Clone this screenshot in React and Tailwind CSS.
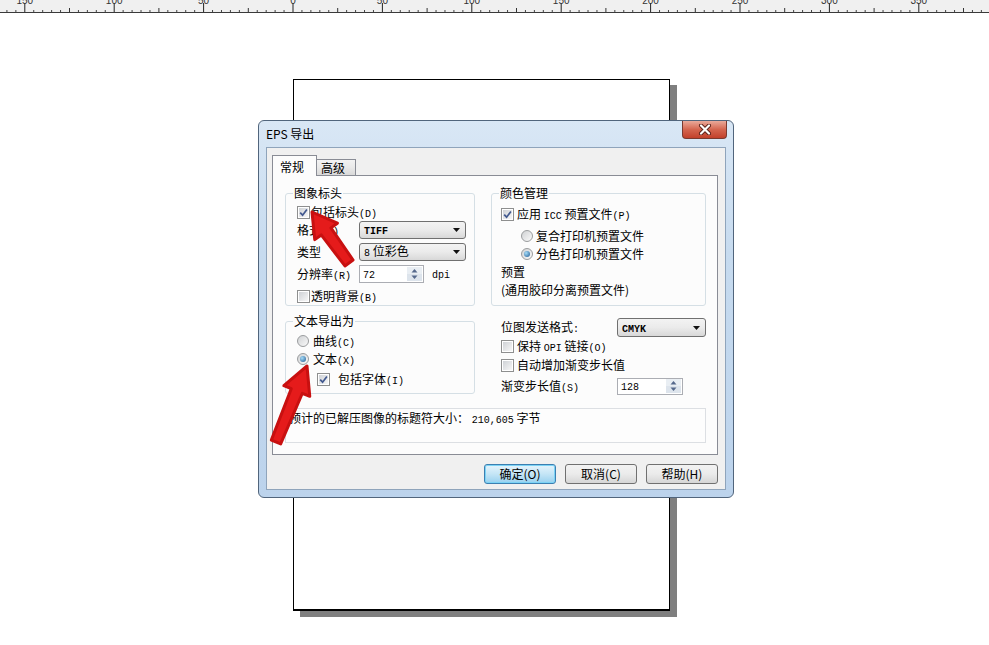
import React from "react";

const STEP = 89.4 / 10;

function Ruler() {
  const ticks = [];
  for (let i = -35; i <= 78; i++) {
    const x = 293 + i * STEP;
    if (i % 10 === 0) {
      ticks.push(<line key={i} x1={x} y1="3" x2={x} y2="12" stroke="#222" />);
      ticks.push(
        <text key={"t" + i} x={x} y="4" fontSize="10" textAnchor="middle" fill="#333" fontFamily="Liberation Sans, sans-serif">
          {Math.abs(i * 5)}
        </text>
      );
    } else if (i % 5 === 0) {
      ticks.push(<line key={i} x1={x} y1="8" x2={x} y2="12" stroke="#333" />);
    } else {
      ticks.push(<line key={i} x1={x} y1="10" x2={x} y2="12" stroke="#444" />);
    }
  }
  return (
    <svg width="989" height="13" className="block bg-[#f0f0f0]">
      {ticks}
      <line x1="0" y1="12.5" x2="989" y2="12.5" stroke="#3a3a3a" />
    </svg>
  );
}

// latin bits in the dialog are drawn narrow, like SimSun
function M({ children }) {
  return <span className="font-['Liberation_Mono',monospace] text-[10px]">{children}</span>;
}

function Check({ on }) {
  return (
    <span className="flex h-[13px] w-[13px] shrink-0 items-center justify-center border border-[#8e8f8f] bg-white p-[1px]">
      <span className="flex h-full w-full items-center justify-center bg-gradient-to-br from-[#cfd2d6] to-[#f7f7f7]">
        {on && (
          <svg width="9" height="9" viewBox="0 0 9 9">
            <path d="M1.2 4.6 L3.6 7.2 L7.9 1.4" fill="none" stroke="#42598f" strokeWidth="1.7" />
          </svg>
        )}
      </span>
    </span>
  );
}

function Radio({ on }) {
  return (
    <span className="flex h-[12px] w-[12px] shrink-0 items-center justify-center rounded-full border border-[#9a9c9e] bg-gradient-to-br from-[#d0d2d4] to-[#fafafa]">
      {on && <span className="h-[6px] w-[6px] rounded-full bg-[radial-gradient(circle_at_35%_35%,#a5dcf8,#1f5a93)]" />}
    </span>
  );
}

function Arrow() {
  return (
    <svg width="7" height="4" viewBox="0 0 7 4">
      <path d="M0 0h7L3.5 4z" fill="#111" />
    </svg>
  );
}

function Select({ w, h, value }) {
  return (
    <div className={`flex ${w} ${h} items-center justify-between rounded-[3px] border border-[#707070] bg-gradient-to-b from-[#f3f3f3] via-[#ebebeb] to-[#d8d8d8] pl-[4px] pr-[5px]`}>
      <span className="leading-none">{value}</span>
      <Arrow />
    </div>
  );
}

function Spin() {
  return (
    <svg width="15" height="14" viewBox="0 0 15 14" className="shrink-0">
      <rect x="0" y="0" width="15" height="14" fill="#dde4ec" />
      <rect x="0" y="0" width="15" height="7" fill="#e9eef3" />
      <path d="M7.5 2 L10.5 5.5 H4.5z" fill="#56698c" />
      <path d="M7.5 12 L10.5 8.5 H4.5z" fill="#56698c" />
    </svg>
  );
}

function Group({ title, h, w, children }) {
  return (
    <fieldset className={`${h} ${w} rounded-[3px] border border-[#d5dfe5] px-[7px]`}>
      <legend className="px-[1px] text-[12px] leading-[14px]">{title}</legend>
      {children}
    </fieldset>
  );
}

function RedArrow({ tail, tip, sw, hl, hw }) {
  const dx = tip[0] - tail[0];
  const dy = tip[1] - tail[1];
  const len = Math.hypot(dx, dy);
  const ux = dx / len;
  const uy = dy / len;
  const nx = -uy;
  const ny = ux;
  const neck = [tip[0] - ux * hl, tip[1] - uy * hl];
  const p = (a, k) => `${a[0] + nx * k},${a[1] + ny * k}`;
  const pts = [
    p(tail, -sw * 0.42),
    p(neck, -sw / 2),
    p(neck, -hw / 2),
    `${tip[0]},${tip[1]}`,
    p(neck, hw / 2),
    p(neck, sw / 2),
    p(tail, sw * 0.42),
  ].join(" ");
  return <polygon points={pts} fill="#e51b1b" stroke="#c81010" strokeWidth="3" strokeLinejoin="round" />;
}

export default function App() {
  return (
    <div className="relative h-[645px] w-[989px] overflow-hidden bg-white font-['Noto_Sans_CJK_SC',sans-serif] text-black">
      <Ruler />

      {/* page on the canvas */}
      <div className="absolute left-[293px] top-[79px] h-[532px] w-[377px] border border-b-2 border-black bg-white shadow-[7px_6px_0_#7f7f7f]" />

      {/* EPS export dialog */}
      <div className="absolute left-[258px] top-[120px] flex h-[378px] w-[476px] flex-col rounded-[6px] border border-[#51657c] bg-[linear-gradient(180deg,#d9e7f5_0%,#c7dbef_35%,#bcd3ec_100%)] px-[7px] pb-[7px] text-[12px]">
        <div className="flex h-[26px] items-start justify-between">
          <div className="flex h-[26px] items-center leading-none">EPS 导出</div>
          <div className="mr-[-1px] flex h-[18px] w-[45px] items-center justify-center rounded-b-[4px] border border-t-0 border-[#7a3a30] bg-gradient-to-b from-[#e9a99a] via-[#d4654f] to-[#c2402b]">
            <svg width="14" height="11" viewBox="0 0 14 11">
              <path d="M3 1.5 L11 9.5 M11 1.5 L3 9.5" stroke="#5a2019" strokeWidth="4" strokeLinecap="round" />
              <path d="M3 1.5 L11 9.5 M11 1.5 L3 9.5" stroke="#fff" strokeWidth="2.2" strokeLinecap="round" />
            </svg>
          </div>
        </div>

        <div className="flex flex-1 flex-col border border-[#8fa4bb] bg-[#f0f0f0] pl-[5px] pt-[7px]">
          {/* tabs */}
          <div className="flex h-[20px] items-end">
            <div className="relative z-10 -mb-px flex h-[21px] w-[45px] items-start border border-b-0 border-[#898c95] bg-[#fcfcfc] pl-[7px] pt-[2px]">
              常规
            </div>
            <div className="-ml-px flex h-[16px] w-[40px] items-center border border-b-0 border-[#898c95] bg-gradient-to-b from-[#f3f3f3] via-[#e9e9e9] to-[#d9d9d9] pl-[4px]">
              高级
            </div>
          </div>

          <div className="flex h-[280px] w-[446px] flex-col border border-[#898c95] bg-[#fcfcfc] pl-[12px] pt-[10px]">
            <div className="flex h-[210px] gap-[16px]">
              {/* left column */}
              <div className="flex w-[190px] flex-col">
                <Group title="图象标头" h="h-[120px]" w="w-[190px]">
                  <div className="flex flex-col pl-[4px] pt-[3px]">
                    <div className="flex h-[18px] items-center gap-[1px]">
                      <Check on />
                      <span>包括标头<M>(D)</M></span>
                    </div>
                    <div className="flex h-[18px] items-center">
                      <span className="w-[62px]">格式<M>(F)</M></span>
                      <Select w="w-[107px]" h="h-[18px]" value={<span className="font-['Liberation_Mono',monospace] text-[10px] font-bold">TIFF</span>} />
                    </div>
                    <div className="mt-[4px] flex h-[18px] items-center">
                      <span className="w-[62px]">类型</span>
                      <Select w="w-[107px]" h="h-[18px]" value={<span><M>8</M>&nbsp;位彩色</span>} />
                    </div>
                    <div className="mt-[4px] flex h-[18px] items-center">
                      <span className="w-[62px]">分辨率<M>(R)</M></span>
                      <div className="flex h-[18px] w-[65px] items-center border border-[#abadb3] bg-white pr-[1px]">
                        <span className="flex-1 pl-[3px] leading-none"><M>72</M></span>
                        <Spin />
                      </div>
                      <span className="ml-[8px] leading-none"><M>dpi</M></span>
                    </div>
                    <div className="mt-[4px] flex h-[18px] items-center gap-[1px]">
                      <Check />
                      <span>透明背景<M>(B)</M></span>
                    </div>
                  </div>
                </Group>

                <div className="mt-[8px]">
                  <Group title="文本导出为" h="h-[80px]" w="w-[190px]">
                    <div className="flex flex-col pl-[4px] pt-[4px]">
                      <div className="flex h-[18px] items-center gap-[4px]">
                        <Radio />
                        <span>曲线<M>(C)</M></span>
                      </div>
                      <div className="flex h-[18px] items-center gap-[4px]">
                        <Radio on />
                        <span>文本<M>(X)</M></span>
                      </div>
                      <div className="mt-[2px] flex h-[18px] items-center gap-[8px] pl-[20px]">
                        <Check on />
                        <span>包括字体<M>(I)</M></span>
                      </div>
                    </div>
                  </Group>
                </div>
              </div>

              {/* right column */}
              <div className="flex w-[215px] flex-col">
                <Group title="颜色管理" h="h-[120px]" w="w-[215px]">
                  <div className="flex flex-col pl-[2px] pt-[5px]">
                    <div className="flex h-[18px] items-center gap-[3px]">
                      <Check on />
                      <span>应用 <M>ICC</M> 预置文件<M>(P)</M></span>
                    </div>
                    <div className="mt-[4px] flex h-[18px] items-center gap-[3px] pl-[20px]">
                      <Radio />
                      <span>复合打印机预置文件</span>
                    </div>
                    <div className="flex h-[18px] items-center gap-[3px] pl-[20px]">
                      <Radio on />
                      <span>分色打印机预置文件</span>
                    </div>
                    <div className="flex h-[18px] items-center">预置</div>
                    <div className="flex h-[18px] items-center">(通用胶印分离预置文件)</div>
                  </div>
                </Group>

                <div className="flex flex-col pl-[10px]">
                  <div className="mt-[12px] flex h-[19px] items-center">
                    <span className="w-[116px]">位图发送格式<M>:</M></span>
                    <Select w="w-[89px]" h="h-[19px]" value={<span className="font-['Liberation_Mono',monospace] text-[10px] font-bold">CMYK</span>} />
                  </div>
                  <div className="flex h-[18px] items-center gap-[3px]">
                    <Check />
                    <span>保持 <M>OPI</M> 链接<M>(O)</M></span>
                  </div>
                  <div className="mt-[1px] flex h-[18px] items-center gap-[3px]">
                    <Check />
                    <span>自动增加渐变步长值</span>
                  </div>
                  <div className="mt-[3px] flex h-[18px] items-center">
                    <span className="w-[116px]">渐变步长值<M>(S)</M></span>
                    <div className="flex h-[17px] w-[66px] items-center border border-[#abadb3] bg-white pr-[1px]">
                      <span className="flex-1 pl-[3px] leading-none"><M>128</M></span>
                      <Spin />
                    </div>
                  </div>
                </div>
              </div>
            </div>

            <div className="mt-[12px] flex h-[35px] w-[421px] items-start border border-[#dcdfe3] bg-[#fdfdfd] pl-[3px] pt-[1px] leading-[16px]">
              <span>预计的已解压图像的标题符大小：&nbsp;<M>210,605</M> 字节</span>
            </div>
          </div>

          <div className="mt-[9px] flex w-[446px] justify-end gap-[9px]">
            <button className="flex h-[20px] w-[72px] items-center justify-center rounded-[3px] border border-[#3c7fb1] bg-gradient-to-b from-[#e5f4fc] via-[#c4e5f6] to-[#98d1ef] shadow-[inset_0_0_0_1px_#7cd3f5]">
              确定(O)
            </button>
            <button className="flex h-[20px] w-[72px] items-center justify-center rounded-[3px] border border-[#707070] bg-gradient-to-b from-[#f2f2f2] via-[#ebebeb] to-[#d6d6d6]">
              取消(C)
            </button>
            <button className="flex h-[20px] w-[72px] items-center justify-center rounded-[3px] border border-[#707070] bg-gradient-to-b from-[#f2f2f2] via-[#ebebeb] to-[#d6d6d6]">
              帮助(H)
            </button>
          </div>
        </div>
      </div>

      {/* red annotation arrows */}
      <svg width="989" height="645" className="pointer-events-none absolute left-0 top-0">
        <RedArrow tail={[349, 263]} tip={[312, 212]} sw={12} hl={24} hw={28} />
        <RedArrow tail={[276, 442]} tip={[307, 366]} sw={12} hl={27} hw={28} />
      </svg>
    </div>
  );
}
